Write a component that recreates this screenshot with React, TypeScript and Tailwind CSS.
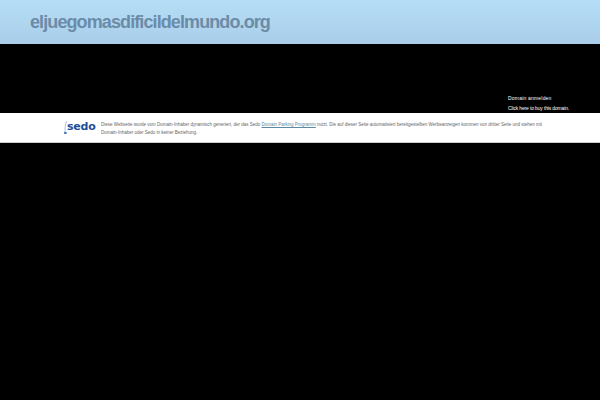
export default function App() {
  return (
    <div className="min-h-[400px] bg-black font-['Liberation_Sans',Arial,sans-serif]">
      <header className="h-[44px] bg-gradient-to-b from-[#b6def6] to-[#a9cde9] pl-[30px] pt-[10px]">
        <h1 className="text-[18px] leading-[24px] font-bold tracking-[-0.9px] text-[#6b8ca8]">
          eljuegomasdificildelmundo.org
        </h1>
      </header>

      <div className="flex h-[69px] flex-col items-start justify-end pl-[508px] text-[5px] leading-[10px] text-white">
        <a className="tracking-[0.2px]">Domain anmelden</a>
        <a className="tracking-[-0.15px]">Click here to buy this domain.</a>
      </div>

      <div className="flex h-[30px] border-b border-[#cccccc] bg-white pl-[64px] pt-[6px]">
        <div className="flex w-[37px] shrink-0 flex-col">
          <div className="flex items-center">
            <svg width="3" height="14" viewBox="0 0 3 14" className="mt-[1px]">
              <path d="M2.5 1 Q0.5 6 1 13" fill="none" stroke="#8fb4dc" strokeWidth="0.8" />
              <circle cx="1" cy="13" r="0.9" fill="#1f4e9c" />
              <circle cx="2.8" cy="13" r="0.7" fill="#1f4e9c" />
            </svg>
            <span className="text-[11px] leading-[12px] font-bold text-[#1f4e9c] font-['DejaVu_Sans',sans-serif] tracking-[-0.2px]">
              sedo
            </span>
          </div>
        </div>
        <p className="w-[445px] pt-[2px] text-[4.5px] leading-[8px] text-[#666666]">
          Diese Webseite wurde vom Domain-Inhaber dynamisch generiert, der das Sedo{" "}
          <a className="text-[#5c8aa5] underline">Domain Parking Programm</a> nutzt. Die auf dieser Seite automatisiert
          bereitgestellten Werbeanzeigen kommen von dritter Seite und stehen mit Domain-Inhaber oder Sedo in keiner
          Beziehung.
        </p>
      </div>
    </div>
  );
}
